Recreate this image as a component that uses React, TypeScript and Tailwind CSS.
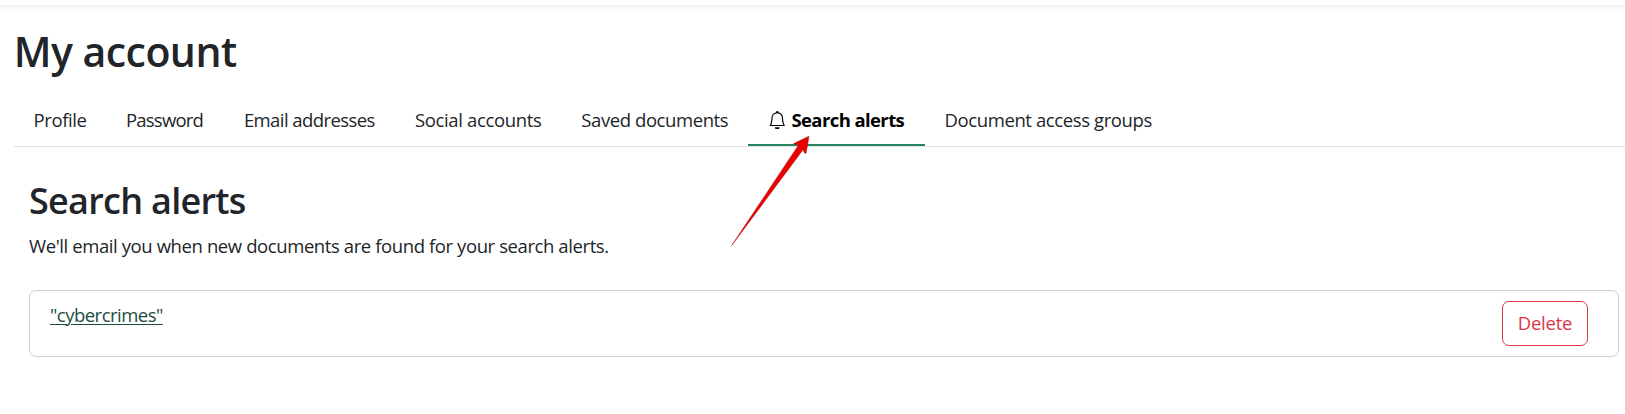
const tabs = [
  { label: "Profile", box: "w-[92.4px]", text: "tracking-[-0.4px]" },
  { label: "Password", box: "w-[117.9px]", text: "tracking-[-0.78px]" },
  { label: "Email addresses", box: "w-[171.1px]", text: "tracking-[-0.58px]" },
  { label: "Social accounts", box: "w-[166.4px]", text: "tracking-[-0.36px]" },
  { label: "Saved documents", box: "w-[186.2px]", text: "tracking-[-0.42px]" },
  { label: "Search alerts", box: "w-[177px]", text: "tracking-[-0.6px]", active: true },
  { label: "Document access groups", box: "w-[246px]", text: "tracking-[-0.4px]" },
];

function BellIcon() {
  return (
    <svg viewBox="0 0 16 16" className="mr-[5px] size-[18.5px] shrink-0" fill="currentColor" aria-hidden="true">
      <path d="M8 16a2 2 0 0 0 2-2H6a2 2 0 0 0 2 2M8 1.918l-.797.161A4 4 0 0 0 4 6c0 .628-.134 2.197-.459 3.742-.16.767-.376 1.566-.663 2.258h10.244c-.287-.692-.502-1.49-.663-2.258C12.134 8.197 12 6.628 12 6a4 4 0 0 0-3.203-3.92zM14.22 12c.223.447.481.801.78 1H1c.299-.199.557-.553.78-1C2.68 10.2 3 6.88 3 6c0-2.42 1.72-4.44 4.005-4.901a1 1 0 1 1 1.99 0A5 5 0 0 1 13 6c0 .88.32 4.2 1.22 6" />
    </svg>
  );
}

function Pointer() {
  return (
    <svg className="pointer-events-none absolute left-[728px] top-[132px] h-[118px] w-[86px]" viewBox="728 132 86 118" aria-hidden="true">
      <path
        d="M809 136.2 L793.7 143.6 Q794 145 798.6 145 L731.6 245.6 L803.2 149.6 Q804 153.8 806 153.4 Z"
        fill="#eb0000"
        stroke="#a31515"
        strokeOpacity="0.6"
        strokeWidth="0.9"
        strokeLinejoin="round"
      />
    </svg>
  );
}

export default function App() {
  return (
    <div className="relative flex h-[414px] flex-col overflow-hidden bg-white font-['Open_Sans','Noto_Sans',sans-serif] text-[18.5px] text-[#212529]">
      <header className="h-[5px] shrink-0 bg-white shadow-[0_2.3px_4.6px_rgba(0,0,0,0.075)]" />
      <h1 className="mt-[21px] pl-[13.7px] text-[41px] leading-[50px] font-semibold tracking-[-0.53px]">My account</h1>
      <nav className="mt-[18px] ml-[14px] flex h-[53px] shrink-0 border-b border-[#dee2e6]">
        {tabs.map((tab) => (
          <a
            key={tab.label}
            className={`flex h-[52px] shrink-0 items-center border-b-2 pt-[2px] whitespace-nowrap ${tab.box} ${
              tab.active ? "border-[#25845c] pl-[20px] font-bold text-black" : "border-transparent pl-[19.6px]"
            }`}
          >
            {tab.active && <BellIcon />}
            <span className={tab.text}>{tab.label}</span>
          </a>
        ))}
      </nav>
      <main className="flex flex-col pr-[6px] pl-[29px]">
        <h2 className="mt-[32px] text-[36px] leading-[44px] font-semibold tracking-[-0.72px]">Search alerts</h2>
        <p className="mt-[9px] leading-7 tracking-[-0.405px]">We'll email you when new documents are found for your search alerts.</p>
        <div className="mt-[30px] flex h-[67px] items-start justify-between rounded-[7px] border border-[#ced0d2] pt-[10px] pr-[30px] pl-[20px]">
          <a className="leading-7 tracking-[-0.52px] text-[#1e4d40] underline decoration-1 underline-offset-[1.5px]">"cybercrimes"</a>
          <button className="h-[45px] w-[86px] rounded-[7px] border border-[#dc3545] pb-[2px] tracking-[-0.25px] text-[#dc3545]">Delete</button>
        </div>
      </main>
      <Pointer />
    </div>
  );
}
